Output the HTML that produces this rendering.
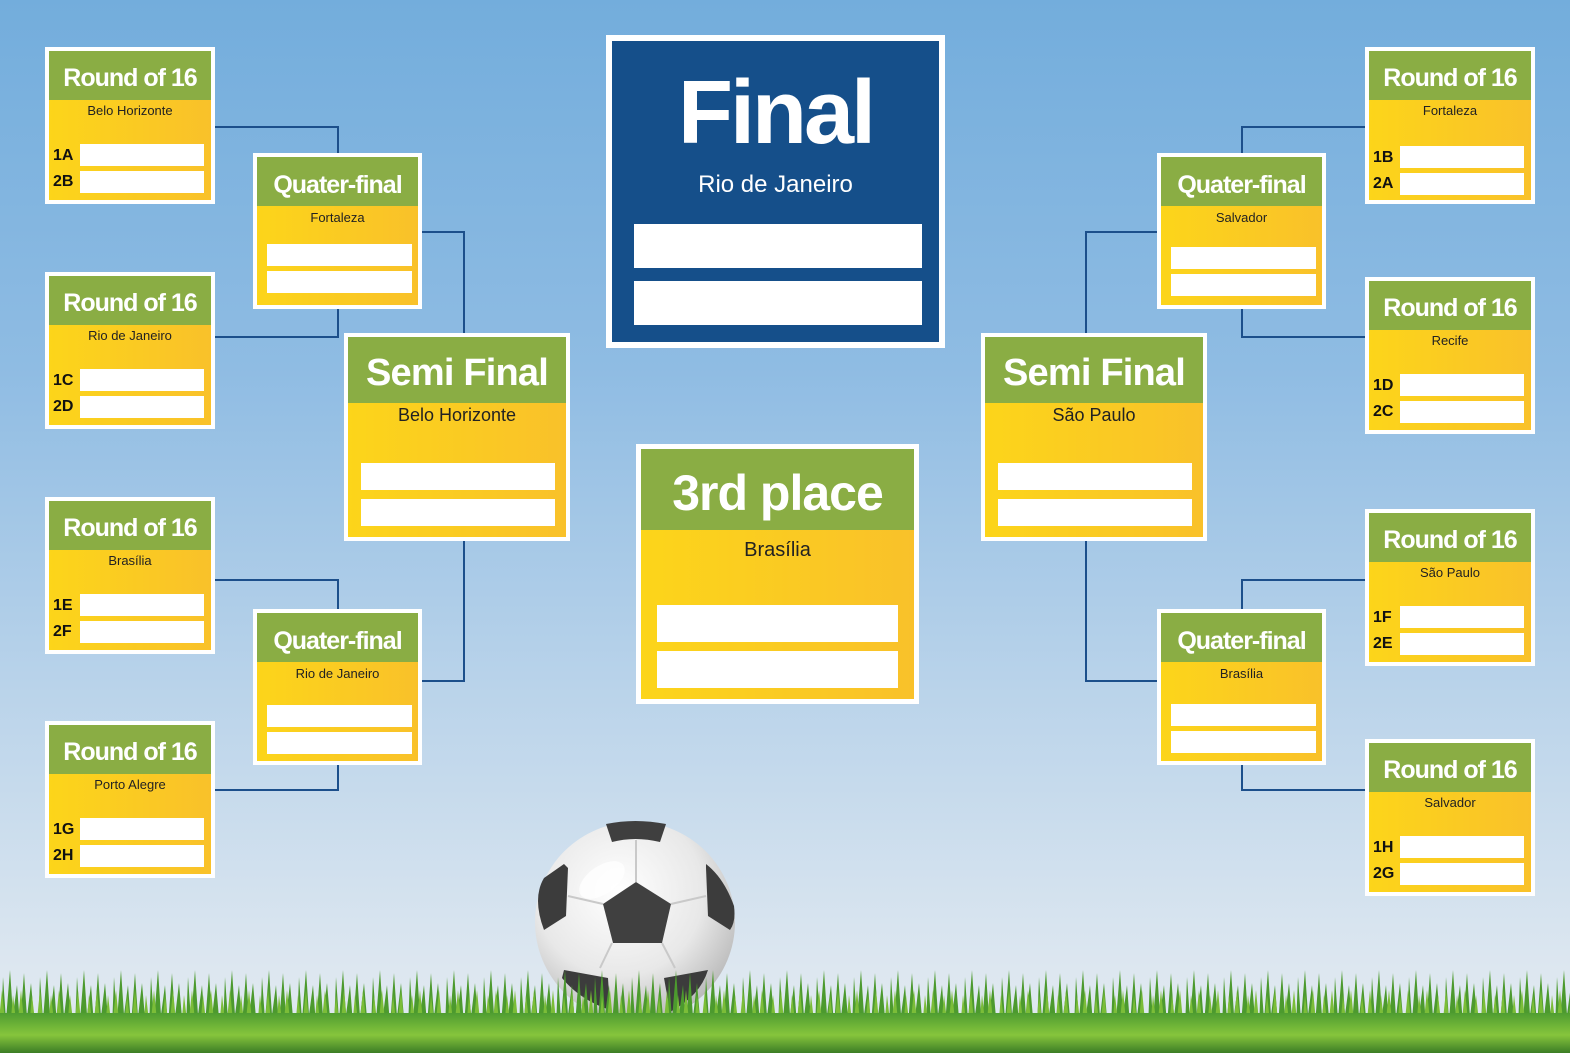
<!DOCTYPE html>
<html><head><meta charset="utf-8">
<style>
*{margin:0;padding:0;box-sizing:border-box}
body{width:1570px;height:1053px;overflow:hidden;position:relative;font-family:"Liberation Sans",sans-serif;
background:linear-gradient(180deg,#73addc 0%,#8fbce3 35%,#b9d3ea 65%,#dde7f0 92%,#e0e9f1 100%)}
.b{position:absolute;border:4px solid #fff;background:linear-gradient(90deg,#fcd51a,#f9c12a)}
.h{background:#8aad44;color:#fff;font-weight:bold;text-align:center;white-space:nowrap}
.s{text-align:center;color:#222;position:absolute;left:0;right:0}
.i{position:absolute;background:#fff}
.l{position:absolute;font-weight:bold;font-size:16px;color:#111;left:4px}
.r16{width:170px;height:157px}
.r16 .h{height:49px;font-size:25px;line-height:54px;letter-spacing:-1px}
.r16 .s{top:52px;font-size:13px}
.r16 .i{left:31px;width:124px;height:22px}
.qf{width:169px;height:156px}
.qf .h{height:49px;font-size:25px;line-height:56px;letter-spacing:-1px}
.qf .s{top:53px;font-size:13px}
.qf .i{left:10px;width:145px;height:22px}
.sf{width:226px;height:208px}
.sf .h{height:66px;font-size:38px;line-height:72px;letter-spacing:-0.8px}
.sf .s{top:68px;font-size:18px}
.sf .i{left:13px;width:194px;height:27px}
.ln{position:absolute;background:#1c4f8b}
</style></head><body>

<div class="ln" style="left:215px;top:126px;width:124px;height:2px"></div>
<div class="ln" style="left:337px;top:126px;width:2px;height:28px"></div>
<div class="ln" style="left:215px;top:336px;width:124px;height:2px"></div>
<div class="ln" style="left:337px;top:308px;width:2px;height:30px"></div>
<div class="ln" style="left:422px;top:231px;width:43px;height:2px"></div>
<div class="ln" style="left:463px;top:231px;width:2px;height:103px"></div>
<div class="ln" style="left:422px;top:680px;width:43px;height:2px"></div>
<div class="ln" style="left:463px;top:541px;width:2px;height:141px"></div>
<div class="ln" style="left:215px;top:579px;width:124px;height:2px"></div>
<div class="ln" style="left:337px;top:579px;width:2px;height:31px"></div>
<div class="ln" style="left:215px;top:789px;width:124px;height:2px"></div>
<div class="ln" style="left:337px;top:765px;width:2px;height:26px"></div>

<div class="ln" style="left:1241px;top:126px;width:124px;height:2px"></div>
<div class="ln" style="left:1241px;top:126px;width:2px;height:28px"></div>
<div class="ln" style="left:1241px;top:336px;width:124px;height:2px"></div>
<div class="ln" style="left:1241px;top:308px;width:2px;height:30px"></div>
<div class="ln" style="left:1085px;top:231px;width:73px;height:2px"></div>
<div class="ln" style="left:1085px;top:231px;width:2px;height:103px"></div>
<div class="ln" style="left:1085px;top:680px;width:73px;height:2px"></div>
<div class="ln" style="left:1085px;top:541px;width:2px;height:141px"></div>
<div class="ln" style="left:1241px;top:579px;width:124px;height:2px"></div>
<div class="ln" style="left:1241px;top:579px;width:2px;height:31px"></div>
<div class="ln" style="left:1241px;top:789px;width:124px;height:2px"></div>
<div class="ln" style="left:1241px;top:765px;width:2px;height:26px"></div>

<div class="b r16" style="left:45px;top:47px"><div class="h">Round of 16</div><div class="s">Belo Horizonte</div>
<span class="l" style="top:96px">1A</span><div class="i" style="top:93px"></div><span class="l" style="top:122px">2B</span><div class="i" style="top:120px"></div></div>
<div class="b r16" style="left:45px;top:272px"><div class="h">Round of 16</div><div class="s">Rio de Janeiro</div>
<span class="l" style="top:96px">1C</span><div class="i" style="top:93px"></div><span class="l" style="top:122px">2D</span><div class="i" style="top:120px"></div></div>
<div class="b r16" style="left:45px;top:497px"><div class="h">Round of 16</div><div class="s">Brasília</div>
<span class="l" style="top:96px">1E</span><div class="i" style="top:93px"></div><span class="l" style="top:122px">2F</span><div class="i" style="top:120px"></div></div>
<div class="b r16" style="left:45px;top:721px"><div class="h">Round of 16</div><div class="s">Porto Alegre</div>
<span class="l" style="top:96px">1G</span><div class="i" style="top:93px"></div><span class="l" style="top:122px">2H</span><div class="i" style="top:120px"></div></div>

<div class="b r16" style="left:1365px;top:47px"><div class="h">Round of 16</div><div class="s">Fortaleza</div>
<span class="l" style="top:98px">1B</span><div class="i" style="top:95px"></div><span class="l" style="top:124px">2A</span><div class="i" style="top:122px"></div></div>
<div class="b r16" style="left:1365px;top:277px"><div class="h">Round of 16</div><div class="s">Recife</div>
<span class="l" style="top:96px">1D</span><div class="i" style="top:93px"></div><span class="l" style="top:122px">2C</span><div class="i" style="top:120px"></div></div>
<div class="b r16" style="left:1365px;top:509px"><div class="h">Round of 16</div><div class="s">São Paulo</div>
<span class="l" style="top:96px">1F</span><div class="i" style="top:93px"></div><span class="l" style="top:122px">2E</span><div class="i" style="top:120px"></div></div>
<div class="b r16" style="left:1365px;top:739px"><div class="h">Round of 16</div><div class="s">Salvador</div>
<span class="l" style="top:96px">1H</span><div class="i" style="top:93px"></div><span class="l" style="top:122px">2G</span><div class="i" style="top:120px"></div></div>

<div class="b qf" style="left:253px;top:153px"><div class="h">Quater-final</div><div class="s">Fortaleza</div>
<div class="i" style="top:87px"></div><div class="i" style="top:114px"></div></div>
<div class="b qf" style="left:253px;top:609px"><div class="h">Quater-final</div><div class="s">Rio de Janeiro</div>
<div class="i" style="top:92px"></div><div class="i" style="top:119px"></div></div>
<div class="b qf" style="left:1157px;top:153px"><div class="h">Quater-final</div><div class="s">Salvador</div>
<div class="i" style="top:90px"></div><div class="i" style="top:117px"></div></div>
<div class="b qf" style="left:1157px;top:609px"><div class="h">Quater-final</div><div class="s">Brasília</div>
<div class="i" style="top:91px"></div><div class="i" style="top:118px"></div></div>

<div class="b sf" style="left:344px;top:333px"><div class="h">Semi Final</div><div class="s">Belo Horizonte</div>
<div class="i" style="top:126px"></div><div class="i" style="top:162px"></div></div>
<div class="b sf" style="left:981px;top:333px"><div class="h">Semi Final</div><div class="s">São Paulo</div>
<div class="i" style="top:126px"></div><div class="i" style="top:162px"></div></div>

<div style="position:absolute;left:606px;top:35px;width:339px;height:313px;border:6px solid #fff;background:#154f8a">
<div style="position:absolute;left:0;right:0;top:22px;text-align:center;color:#fff;font-weight:bold;font-size:90px;line-height:100px;letter-spacing:-3px">Final</div>
<div style="position:absolute;left:0;right:0;top:130px;text-align:center;color:#fff;font-size:24px">Rio de Janeiro</div>
<div class="i" style="left:22px;top:183px;width:288px;height:44px"></div>
<div class="i" style="left:22px;top:240px;width:288px;height:44px"></div>
</div>

<div class="b" style="left:636px;top:444px;width:283px;height:260px;border-width:5px">
<div class="h" style="height:81px;font-size:50px;line-height:88px;letter-spacing:-1px">3rd place</div>
<div class="s" style="top:90px;font-size:20px">Brasília</div>
<div class="i" style="left:16px;top:156px;width:241px;height:37px"></div>
<div class="i" style="left:16px;top:202px;width:241px;height:37px"></div>
</div>

<svg style="position:absolute;left:530px;top:818px" width="210" height="210" viewBox="0 0 210 210">
<defs>
<radialGradient id="bg" cx="0.42" cy="0.35" r="0.7">
<stop offset="0" stop-color="#ffffff"/><stop offset="0.6" stop-color="#e8e8e8"/><stop offset="1" stop-color="#b5b5b5"/></radialGradient>
</defs>
<circle cx="105" cy="104" r="100" fill="url(#bg)"/>
<path d="M76 6 Q105 0 136 6 L130 24 Q105 18 82 24 Z" fill="#3f3f3f"/>
<path d="M106 64 L141 86 L132 125 L83 125 L73 86 Z" fill="#404040"/>
<path d="M34 46 L38 50 L36 98 L14 112 Q2 80 14 60 Z" fill="#3c3c3c"/>
<path d="M176 46 Q194 60 204 88 Q206 104 200 112 L178 98 L176 50 Z" fill="#3c3c3c"/>
<path d="M34 152 L78 160 L80 192 Q50 182 32 160 Z" fill="#3c3c3c"/>
<path d="M134 160 L178 152 Q170 178 140 194 Z" fill="#3c3c3c"/>
<path d="M82 125 L70 150 M132 125 L145 150 M73 86 L38 78 M141 86 L176 78 M106 64 L106 22" stroke="#c9c9c9" stroke-width="2" fill="none"/>
<ellipse cx="72" cy="62" rx="26" ry="14" fill="#fff" opacity="0.75" transform="rotate(-35 72 62)"/>
</svg>

<svg style="position:absolute;left:0;top:965px" width="1570" height="88" viewBox="0 0 1570 88">
<defs>
<linearGradient id="gg" x1="0" y1="0" x2="0" y2="1">
<stop offset="0" stop-color="#4f9d31"/><stop offset="0.55" stop-color="#86c53c"/><stop offset="1" stop-color="#3c7d26"/></linearGradient>
<pattern id="bl" width="37" height="88" patternUnits="userSpaceOnUse">
<path d="M0 88 L3 12 L6 55 L10 5 L13 50 L17 20 L20 60 L24 8 L27 52 L31 18 L37 88 Z" fill="#4c9a2e"/>
</pattern>
<pattern id="bl2" width="19" height="88" patternUnits="userSpaceOnUse" x="8">
<path d="M0 88 L5 30 L9 65 L13 25 L19 88 Z" fill="#7bbd38"/>
</pattern>
</defs>
<rect x="0" y="0" width="1570" height="88" fill="url(#bl)"/>
<rect x="0" y="0" width="1570" height="88" fill="url(#bl2)"/>
<rect x="0" y="48" width="1570" height="40" fill="url(#gg)"/>
</svg>
</body></html>
